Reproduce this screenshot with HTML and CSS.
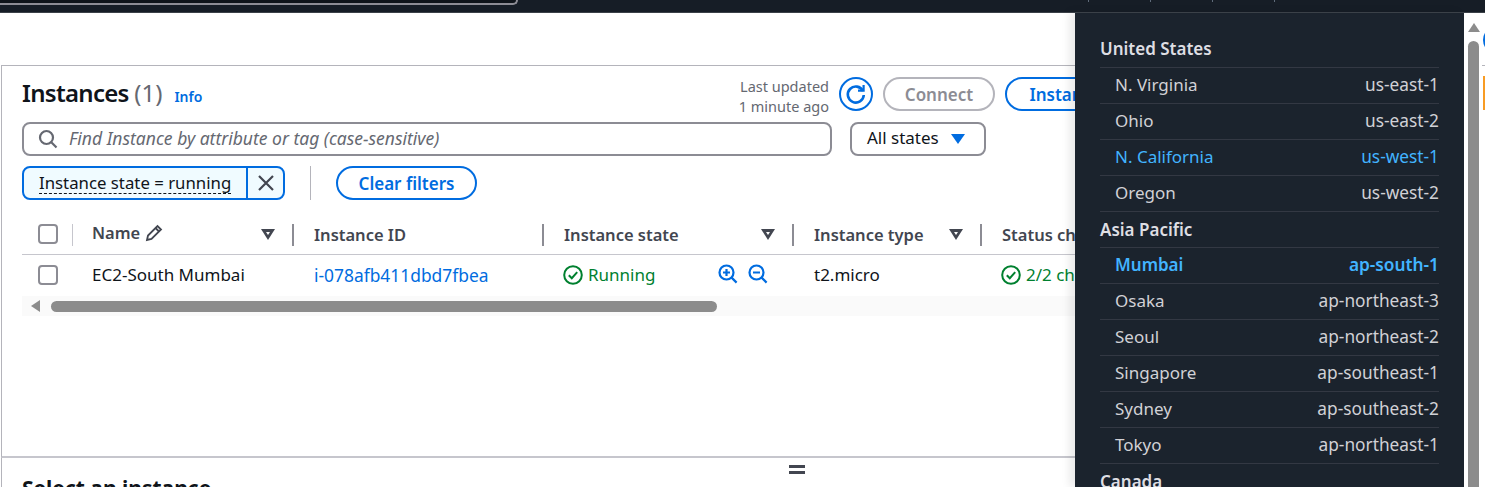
FILE: index.html
```html
<!DOCTYPE html>
<html lang="en">
<head>
  <meta charset="UTF-8">
  <title>Instances | EC2</title>
  <link rel="stylesheet" href="styles.css">
</head>
<body>

<div class="topbar">
  <div class="top-search"></div>
  <div class="top-ticks"><i></i><i></i><i></i><i></i></div>
</div>

<div class="page">
  <section class="panel">
    <div class="title-row">
      <h1>Instances <span class="count">(1)</span></h1>
      <a class="info">Info</a>
      <div class="title-actions">
        <div class="updated">Last updated<br>1 minute ago</div>
        <button class="btn-refresh">
          <svg width="22" height="22" viewBox="0 0 22 22" fill="none" stroke="#006ce0" stroke-width="2.6">
            <path d="M18 8a8 8 0 1 0 .8 4"/>
            <path d="M13 7.6h5.6V2" stroke-width="2.2"/>
          </svg>
        </button>
        <button class="btn btn-disabled">Connect</button>
        <button class="btn btn-state">Instance state</button>
      </div>
    </div>

    <div class="search-row">
      <div class="search-box">
        <svg width="20" height="20" viewBox="0 0 20 20" fill="none" stroke="#656871" stroke-width="2.2">
          <circle cx="8.5" cy="8.5" r="6.5"/>
          <path d="M13.3 13.3l5.2 5.2"/>
        </svg>
        <span>Find Instance by attribute or tag (case-sensitive)</span>
      </div>
      <div class="state-select"><span>All states</span> <i class="caret"></i></div>
    </div>

    <div class="filter-row">
      <div class="chip">
        <span class="chip-label"><span>Instance state = running</span></span>
        <span class="chip-close">
          <svg width="16" height="16" viewBox="0 0 16 16" stroke="#424650" stroke-width="2.2"><path d="M1 1l14 14M15 1L1 15"/></svg>
        </span>
      </div>
      <div class="filter-divider"></div>
      <button class="btn btn-clear">Clear filters</button>
    </div>

    <div class="table">
      <div class="row head">
        <div class="cell check-cell"><i class="check"></i></div>
        <div class="cell th sep-light">
          <span class="name-head">Name
            <svg width="18" height="18" viewBox="0 0 18 18" fill="none" stroke="#424650" stroke-width="1.8"><path d="M2 16l1-4.5L12.5 2 16 5.5 6.5 15z"/><path d="M10.5 4l3.5 3.5"/></svg>
          </span>
          <i class="sort"></i>
        </div>
        <div class="cell th">Instance ID</div>
        <div class="cell th">Instance state <i class="sort"></i></div>
        <div class="cell th">Instance type <i class="sort"></i></div>
        <div class="cell th last">Status check</div>
      </div>
      <div class="row body-row">
        <div class="cell check-cell"><i class="check"></i></div>
        <div class="cell name-cell">EC2-South Mumbai</div>
        <div class="cell link">i-078afb411dbd7fbea</div>
        <div class="cell state-cell">
          <span class="ok">
            <svg class="ok-icon" width="20" height="20" viewBox="0 0 20 20" fill="none" stroke="#00802f" stroke-width="2"><circle cx="10" cy="10" r="8.8"/><path d="M5.8 10.2l3 3 5.4-6"/></svg>
            Running
          </span>
          <span class="zooms">
            <svg width="20" height="20" viewBox="0 0 20 20" fill="none" stroke="#006ce0" stroke-width="2.2"><circle cx="8.5" cy="8.5" r="7"/><path d="M13.6 13.6l5 5M8.5 5v7M5 8.5h7"/></svg>
            <svg width="20" height="20" viewBox="0 0 20 20" fill="none" stroke="#006ce0" stroke-width="2.2"><circle cx="8.5" cy="8.5" r="7"/><path d="M13.6 13.6l5 5M5 8.5h7"/></svg>
          </span>
        </div>
        <div class="cell">t2.micro</div>
        <div class="cell last">
          <span class="ok">
            <svg class="ok-icon" width="20" height="20" viewBox="0 0 20 20" fill="none" stroke="#00802f" stroke-width="2"><circle cx="10" cy="10" r="8.8"/><path d="M5.8 10.2l3 3 5.4-6"/></svg>
            2/2 checks
          </span>
        </div>
      </div>
      <div class="hscroll">
        <i class="hscroll-arrow"></i>
        <div class="hscroll-thumb"></div>
      </div>
    </div>
  </section>

  <section class="detail">
    <div class="drag-handle"></div>
    <h2>Select an instance</h2>
  </section>
</div>

<div class="region-menu">
  <h3>United States</h3>
  <div class="region"><span>N. Virginia</span><span>us-east-1</span></div>
  <div class="region"><span>Ohio</span><span>us-east-2</span></div>
  <div class="region hover"><span>N. California</span><span>us-west-1</span></div>
  <div class="region"><span>Oregon</span><span>us-west-2</span></div>
  <h3>Asia Pacific</h3>
  <div class="region current"><span>Mumbai</span><span>ap-south-1</span></div>
  <div class="region"><span>Osaka</span><span>ap-northeast-3</span></div>
  <div class="region"><span>Seoul</span><span>ap-northeast-2</span></div>
  <div class="region"><span>Singapore</span><span>ap-southeast-1</span></div>
  <div class="region"><span>Sydney</span><span>ap-southeast-2</span></div>
  <div class="region"><span>Tokyo</span><span>ap-northeast-1</span></div>
  <h3>Canada</h3>
</div>

<div class="menu-scroll">
  <i class="menu-scroll-arrow"></i>
  <div class="menu-scroll-thumb"></div>
  <i class="edge-blue"></i>
  <i class="edge-line"></i>
  <i class="edge-orange"></i>
</div>

</body>
</html>
```
FILE: styles.css
```css
html, body {
  height: 487px;
  overflow: hidden;
}

body {
  margin: 0;
  position: relative;
  font-family: 'Noto Sans', sans-serif;
  font-size: 17px;
  color: #0f141a;
  background-color: #fff;
}

button {
  font-family: inherit;
}

.topbar {
  display: flex;
  height: 12px;
  background-color: #161d26;
  border-bottom: 1px solid #3b4148;
  overflow: hidden;
}

.top-search {
  width: 516px;
  height: 3px;
  background-color: #0f141a;
  border-bottom: 2px solid #8c8c94;
  border-right: 2px solid #8c8c94;
  border-bottom-right-radius: 6px;
}

.top-ticks {
  display: flex;
  gap: 61px;
  margin-left: 570px;
}

.top-ticks i {
  width: 1px;
  height: 2px;
  background-color: #5f6b7a;
}

.page {
  padding-top: 52px;
}

.panel {
  height: 380px;
  width: 1500px;
  margin-left: 1px;
  border-top: 1px solid #b4b4bb;
  border-left: 1px solid #b4b4bb;
  border-bottom: 2px solid #c6c6cd;
  padding: 10px 0 0 20px;
}

.title-row {
  display: flex;
  align-items: center;
  height: 36px;
  width: 1150px;
  white-space: nowrap;
}

h1 {
  margin: -4px 0 0;
  font-size: 24px;
  font-weight: 600;
  letter-spacing: -0.7px;
}

.count {
  font-weight: 400;
  color: #656871;
  letter-spacing: 0;
}

.info {
  margin: 5px 0 0 12px;
  font-size: 14px;
  font-weight: 600;
  color: #006ce0;
}

.title-actions {
  display: flex;
  align-items: center;
  margin-left: auto;
  gap: 10px;
}

.updated {
  font-size: 14.5px;
  line-height: 20px;
  margin-top: 3px;
  text-align: right;
  color: #656871;
}

.btn-refresh {
  width: 34px;
  height: 34px;
  padding: 0;
  display: flex;
  align-items: center;
  justify-content: center;
  background-color: #fff;
  border: 2px solid #006ce0;
  border-radius: 50%;
}

.btn {
  height: 34px;
  padding: 0 20px;
  font-size: 17px;
  font-weight: 600;
  background-color: #fff;
  border: 2px solid #006ce0;
  border-radius: 17px;
  color: #006ce0;
  white-space: nowrap;
}

.btn-disabled {
  width: 112px;
  padding: 0;
  border-color: #b4b4bb;
  color: #8c8c94;
}

.btn-state {
  width: 167px;
  padding: 0;
}

.search-row {
  display: flex;
  gap: 18px;
  margin-top: 10px;
}

.search-box {
  width: 810px;
  height: 34px;
  box-sizing: border-box;
  display: flex;
  align-items: center;
  gap: 11px;
  padding-left: 14px;
  border: 2px solid #8c8c94;
  border-radius: 8px;
  font-size: 17.5px;
  font-style: italic;
  color: #656871;
}

.search-box span {
  margin-top: -2px;
}

.state-select {
  width: 136px;
  height: 34px;
  box-sizing: border-box;
  display: flex;
  align-items: center;
  padding-left: 15px;
  border: 2px solid #8c8c94;
  border-radius: 8px;
}

.state-select span {
  margin-top: -3px;
}

.caret {
  width: 0;
  height: 0;
  margin: 0 0 0 12px;
  border-left: 7px solid transparent;
  border-right: 7px solid transparent;
  border-top: 10px solid #006ce0;
}

.filter-row {
  display: flex;
  align-items: center;
  margin-top: 10px;
}

.chip {
  display: flex;
  width: 263px;
  height: 34px;
  box-sizing: border-box;
  border: 2px solid #006ce0;
  border-radius: 8px;
  background-color: #f0fbff;
}

.chip-label {
  flex: 1;
  display: flex;
  align-items: center;
  padding-left: 15px;
  white-space: nowrap;
  font-size: 16.8px;
}

.chip-label span {
  line-height: 20px;
  border-bottom: 1px dashed #0f141a;
}

.chip-close {
  width: 35px;
  display: flex;
  align-items: center;
  justify-content: center;
  border-left: 2px solid #006ce0;
}

.filter-divider {
  width: 1px;
  height: 34px;
  margin: 0 25px;
  background-color: #b4b4bb;
}

.btn-clear {
  width: 141px;
  padding: 0;
}

.table {
  margin-top: 16px;
  width: 1200px;
}

.row {
  display: grid;
  grid-template-columns: 50px 220px 250px 250px 188px 1fr;
}

.row.head {
  height: 38px;
  border-bottom: 1px solid #c6c6cd;
}

.row.body-row {
  height: 41px;
}

.row .cell {
  padding-bottom: 2px;
}

.cell {
  display: flex;
  align-items: center;
  padding-left: 22px;
  white-space: nowrap;
}

.name-cell,
.sep-light {
  padding-left: 20px;
}

.check-cell {
  padding-left: 16px;
}

.check {
  width: 20px;
  height: 20px;
  box-sizing: border-box;
  border: 2px solid #8c8c94;
  border-radius: 4px;
}

.th {
  font-size: 16.5px;
  font-weight: 600;
  color: #424650;
  justify-content: space-between;
  padding-right: 17px;
  position: relative;
}

.th::before {
  content: "";
  position: absolute;
  left: 0;
  top: 8px;
  bottom: 8px;
  width: 2px;
  background-color: #8c8c94;
}

.th.sep-light::before {
  background-color: #c6c6cd;
  width: 1px;
}

.th.last {
  justify-content: flex-start;
}

.name-head {
  display: flex;
  align-items: center;
  gap: 5px;
  margin-top: -3px;
}

.sort {
  width: 0;
  height: 0;
  border-left: 7px solid transparent;
  border-right: 7px solid transparent;
  border-top: 11px solid #424650;
  position: relative;
}

.sort::after {
  content: "";
  position: absolute;
  left: -2px;
  top: -8px;
  border-left: 2px solid transparent;
  border-right: 2px solid transparent;
  border-top: 3px solid #fff;
}

.link {
  color: #006ce0;
  font-size: 17.4px;
}

.state-cell {
  justify-content: space-between;
  padding-right: 24px;
}

.ok {
  display: flex;
  align-items: center;
  gap: 5px;
  margin-left: -1px;
  color: #00802f;
}

.zooms {
  display: flex;
  gap: 10px;
  margin-top: -2px;
}

.hscroll {
  height: 20px;
  display: flex;
  align-items: center;
  background-color: #fafafa;
  width: 1060px;
  padding-left: 9px;
}

.hscroll-arrow {
  width: 0;
  height: 0;
  border-top: 6px solid transparent;
  border-bottom: 6px solid transparent;
  border-right: 9px solid #8c8c8c;
}

.hscroll-thumb {
  width: 666px;
  height: 11px;
  margin-left: 11px;
  border-radius: 6px;
  background-color: #8c8c8c;
}

.detail {
  margin-left: 1px;
  border-left: 1px solid #b4b4bb;
  padding-left: 20px;
  position: relative;
  height: 29px;
  overflow: hidden;
}

.drag-handle {
  position: absolute;
  left: 787px;
  top: 7px;
  width: 16px;
  height: 3px;
  border-top: 3px solid #424650;
  border-bottom: 3px solid #424650;
}

h2 {
  margin: 0;
  padding-top: 18px;
  font-size: 21px;
  line-height: 24px;
  font-weight: 700;
}

.region-menu {
  position: absolute;
  left: 1075px;
  top: 12px;
  width: 389px;
  height: 475px;
  box-sizing: border-box;
  padding: 18px 25px 0;
  background-color: #1b232d;
  border-top: 1px solid #3b4148;
  box-shadow: -6px 0 8px rgba(0, 0, 0, 0.08);
  overflow: hidden;
}

h3 {
  margin: 0;
  height: 36px;
  line-height: 35px;
  box-sizing: border-box;
  font-size: 17px;
  font-weight: 600;
  color: #dedee3;
  border-bottom: 1px solid #333843;
}

.region-menu h3:first-child {
  height: 37px;
  line-height: 36px;
}

.region {
  display: flex;
  justify-content: space-between;
  height: 36px;
  box-sizing: border-box;
  align-items: center;
  padding: 0 0 3px 15px;
  font-size: 17px;
  color: #d1d1d6;
  border-bottom: 1px solid #333843;
}

.region span:last-child {
  font-size: 17.3px;
}

.region.hover {
  color: #42b4ff;
}

.region.current {
  color: #42b4ff;
  font-weight: 600;
}

.menu-scroll {
  position: absolute;
  left: 1464px;
  top: 13px;
  width: 21px;
  height: 474px;
  background-color: #fff;
  overflow: hidden;
}

.menu-scroll-arrow {
  position: absolute;
  left: 4px;
  top: 10px;
  border-left: 6px solid transparent;
  border-right: 6px solid transparent;
  border-bottom: 9px solid #8c8c8c;
}

.menu-scroll-thumb {
  position: absolute;
  left: 4px;
  top: 28px;
  width: 11px;
  height: 460px;
  border-radius: 6px 6px 0 0;
  background-color: #8c8c8c;
}

.edge-blue {
  position: absolute;
  left: 19px;
  top: 15px;
  width: 20px;
  height: 24px;
  box-sizing: border-box;
  border: 3px solid #006ce0;
  border-radius: 50%;
}

.edge-line {
  position: absolute;
  left: 18px;
  top: 52px;
  width: 3px;
  height: 1px;
  background-color: #b4b4bb;
}

.edge-orange {
  position: absolute;
  left: 19px;
  top: 63px;
  width: 2px;
  height: 34px;
  background-color: #f89c24;
}
```
